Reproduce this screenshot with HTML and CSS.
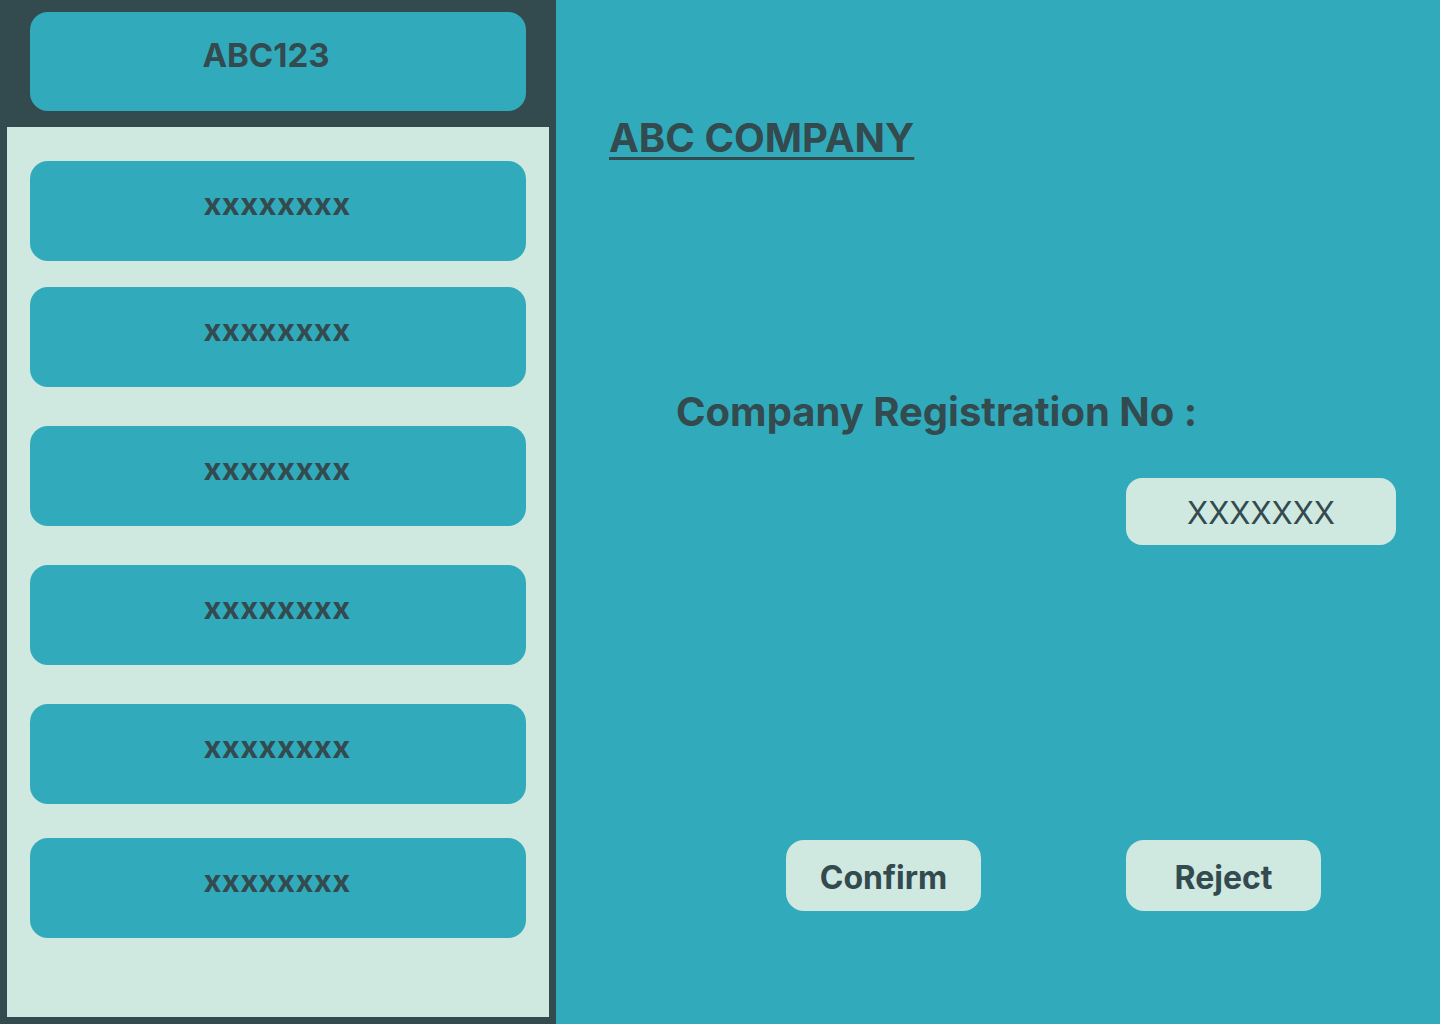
FILE: index.html
```html
<!DOCTYPE html>
<html lang="en">
<head>
<meta charset="utf-8">
<title>ABC Company</title>
<link rel="stylesheet" href="styles.css">
</head>
<body>
<div class="app">
  <aside class="side">
    <div class="side-head">
      <div class="account">ABC123</div>
    </div>
    <nav class="side-list">
      <div class="item i1">xxxxxxxx</div>
      <div class="item i2">xxxxxxxx</div>
      <div class="item i3">xxxxxxxx</div>
      <div class="item i4">xxxxxxxx</div>
      <div class="item i5">xxxxxxxx</div>
      <div class="item i6">xxxxxxxx</div>
    </nav>
  </aside>
  <main class="main">
    <h1 class="title">ABC COMPANY</h1>
    <div class="reg-label">Company Registration No :</div>
    <div class="reg-row">
      <div class="reg-value">XXXXXXX</div>
    </div>
    <div class="actions">
      <button class="btn confirm">Confirm</button>
      <button class="btn reject">Reject</button>
    </div>
  </main>
</div>
</body>
</html>
```
FILE: styles.css
```css
* { box-sizing: border-box; }
html, body { margin: 0; padding: 0; }
body {
  width: 1440px;
  height: 1024px;
  font-family: Inter, "Noto Sans", sans-serif;
  color: #334a4f;
  background: #31abbc;
}
.app {
  display: flex;
  height: 1024px;
}
.side {
  width: 556px;
  flex: none;
  background: #334a4f;
  padding: 12px 7px 7px 7px;
  display: flex;
  flex-direction: column;
}
.side-head {
  height: 115px;
  flex: none;
  padding-left: 23px;
}
.account {
  width: 496px;
  height: 99px;
  background: #31abbc;
  border-radius: 18px;
  font-weight: 700;
  font-size: 33px;
  line-height: 1;
  text-align: center;
  padding: 27px 24px 0 0;
}
.side-list {
  flex: 1;
  background: #cfe8e0;
  padding: 34px 0 0 23px;
  display: flex;
  flex-direction: column;
}
.item {
  width: 496px;
  height: 100px;
  background: #31abbc;
  border-radius: 18px;
  font-weight: 700;
  font-size: 31px;
  line-height: 1;
  text-align: center;
  padding: 27px 2px 0 0;
  letter-spacing: 0.4px;
}
.i2 { margin-top: 26px; }
.i3, .i4, .i5 { margin-top: 39px; }
.i6 { margin-top: 34px; }
.main {
  flex: 1;
  padding: 114px 0 0 53px;
  display: flex;
  flex-direction: column;
}
.title {
  margin: 0;
  align-self: flex-start;
  font-size: 40px;
  font-weight: 700;
  line-height: 48px;
  text-decoration: underline;
  text-decoration-thickness: 3px;
  text-underline-offset: 5px;
}
.reg-label {
  margin: 226px 0 0 67px;
  font-size: 40px;
  font-weight: 700;
  line-height: 48px;
}
.reg-row {
  margin-top: 42px;
  padding-left: 517px;
}
.reg-value {
  width: 270px;
  height: 67px;
  background: #cfe8e0;
  border-radius: 16px;
  font-size: 31px;
  font-weight: 400;
  line-height: 69px;
  text-align: center;
}
.actions {
  margin-top: 295px;
  padding-left: 177px;
  display: flex;
  gap: 145px;
}
.btn {
  width: 195px;
  height: 71px;
  border: none;
  background: #cfe8e0;
  border-radius: 18px;
  font-family: inherit;
  font-size: 32px;
  font-weight: 700;
  color: #334a4f;
  padding: 3px 0 0 0;
}
```
